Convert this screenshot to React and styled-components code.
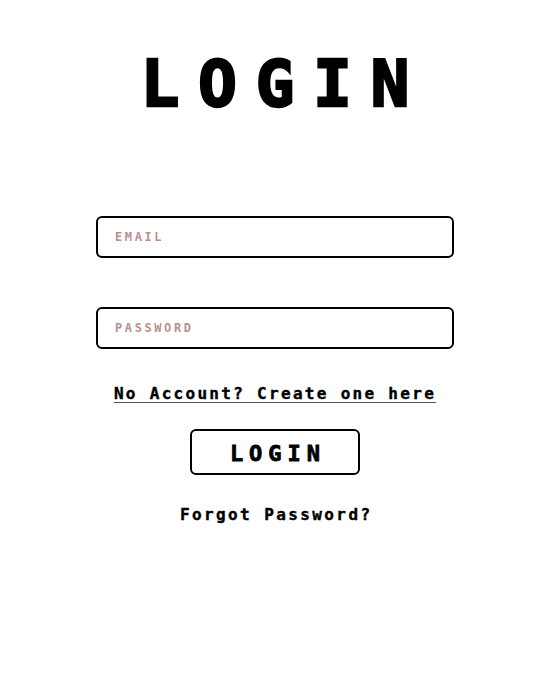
import React from "react";
import styled, { createGlobalStyle } from "styled-components";

const GlobalStyle = createGlobalStyle`
  body {
    margin: 0;
    background: #fff;
    font-family: "DejaVu Sans Mono", "Liberation Mono", monospace;
  }
`;

const App = () => {
  return (
    <>
      <GlobalStyle />
      <Page>
        <Title>LOGIN</Title>
        <Form onSubmit={(e) => e.preventDefault()}>
          <Input type="email" placeholder="EMAIL" />
          <Input type="password" placeholder="PASSWORD" second />
          <SignupLink href="#">No Account? Create one here</SignupLink>
          <Button type="submit">LOGIN</Button>
          <Forgot>Forgot Password?</Forgot>
        </Form>
      </Page>
    </>
  );
};

export default App;

// styles
const Page = styled.div`
  display: flex;
  flex-direction: column;
  align-items: center;
  padding-top: 44px;
  min-height: 694px;
  box-sizing: border-box;
`;
const Title = styled.h1`
  margin: 0;
  font-size: 64px;
  line-height: 80px;
  font-weight: bold;
  letter-spacing: 19px;
  padding-left: 19px;
  color: #000;
  -webkit-text-stroke: 2.5px #000;
`;
const Form = styled.form`
  display: flex;
  flex-direction: column;
  align-items: center;
  width: 358px;
  margin-top: 92px;
`;
const Input = styled.input`
  box-sizing: border-box;
  width: 100%;
  height: 42px;
  margin-top: ${(props) => (props.second ? "49px" : "0")};
  padding: 0 17px;
  border: 2px solid #000;
  border-radius: 6px;
  font-family: inherit;
  font-size: 12px;
  font-weight: bold;
  letter-spacing: 2.6px;
  outline: none;

  &::placeholder {
    color: rosybrown;
  }
`;
const SignupLink = styled.a`
  margin-top: 35px;
  font-size: 16px;
  line-height: 20px;
  font-weight: bold;
  letter-spacing: 2.3px;
  color: #000;
  text-decoration: underline;
  text-decoration-color: #555;
  text-underline-offset: 3px;
  -webkit-text-stroke: 0.4px #000;
`;
const Button = styled.button`
  box-sizing: border-box;
  width: 170px;
  height: 46px;
  margin-top: 25px;
  padding: 2px 0 0 6px;
  border: 2px solid #000;
  border-radius: 6px;
  background: #fff;
  color: #000;
  font-family: inherit;
  font-size: 22px;
  font-weight: bold;
  letter-spacing: 6px;
  -webkit-text-stroke: 0.8px #000;
  cursor: pointer;
`;
const Forgot = styled.p`
  margin: 30px 0 0;
  font-size: 16px;
  line-height: 20px;
  font-weight: bold;
  letter-spacing: 2.4px;
  padding-left: 2.4px;
  -webkit-text-stroke: 0.4px #000;
`;
